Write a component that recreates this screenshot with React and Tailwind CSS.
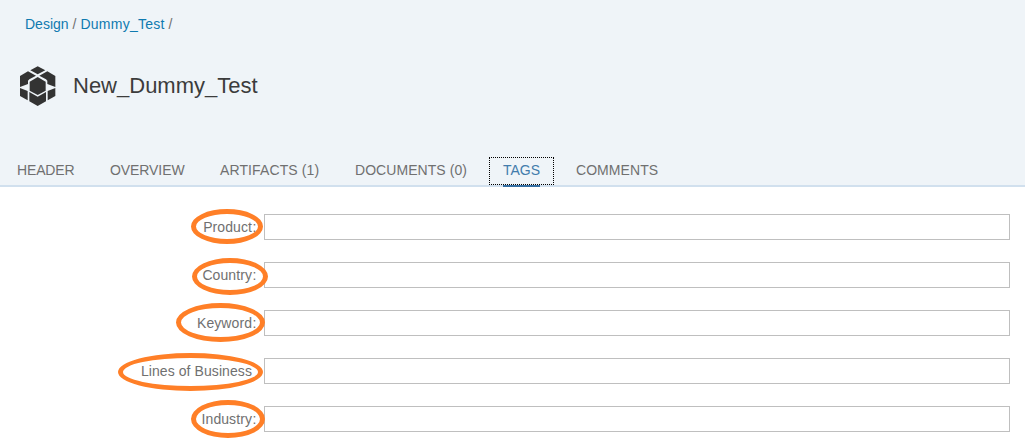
const tabs = [
  { label: 'HEADER', width: 'w-[57px] tracking-[-0.16px]' },
  { label: 'OVERVIEW', width: 'w-[74px] tracking-[-0.08px]' },
  { label: 'ARTIFACTS (1)', width: 'w-[99px] tracking-[0.11px]' },
  { label: 'DOCUMENTS (0)', width: 'w-[112px] tracking-[0.06px]' },
  { label: 'TAGS', width: 'w-[37px]', active: true },
  { label: 'COMMENTS', width: 'w-[82px] tracking-[0.06px]' },
];

const fields = [
  { label: 'Product', colon: true, ring: 'left-[191px] -top-[5px] w-[72px] h-[35px]' },
  { label: 'Country', colon: true, ring: 'left-[192px] -top-[4px] w-[76px] h-[37px]' },
  { label: 'Keyword', colon: true, ring: 'left-[176px] -top-[7px] w-[89px] h-[39px]' },
  { label: 'Lines of Business', ring: 'left-[118px] -top-[5px] w-[145px] h-[38px]' },
  { label: 'Industry', colon: true, ring: 'left-[191px] -top-[6px] w-[74px] h-[38px]' },
];

function PackageIcon() {
  return (
    <svg className="h-[40px] w-[36px] shrink-0" viewBox="6 4 108 120" fill="#333333" aria-hidden="true">
      <path d="M59 5 82 17 59 29 37 17Z" />
      <path d="M30 20 54 33 34 44 30 48V58L6 67V34Z" />
      <path d="M88 20 64 33 84 44 88 48V58L112 67V34Z" />
      <path d="M59 37 83 51V78L59 91 35 78V51Z" />
      <path d="M6 70 29 79V107L6 94Z" />
      <path d="M112 70 89 79V107L112 94Z" />
      <path d="M34 82 59 96 84 82V110L59 124 34 110Z" />
    </svg>
  );
}

export default function App() {
  return (
    <div className="h-[448px] w-[1025px] overflow-hidden bg-white font-['Liberation_Sans',Arial,sans-serif] text-sm text-[#707070]">
      <header className="flex h-[187px] flex-col border-b-2 border-[#d1e0ee] bg-[#eff4f8]">
        <nav className="mt-[14px] flex h-5 items-center gap-[4px] pl-[25px]">
          <a className="text-[#0f7ab0]">Design</a>
          <span>/</span>
          <a className="tracking-[0.24px] text-[#0f7ab0]">Dummy_Test</a>
          <span>/</span>
        </nav>
        <div className="mt-8 flex h-10 items-center gap-[17px] pl-5">
          <PackageIcon />
          <h1 className="text-[22px] leading-10 text-[#3c3c3c]">New_Dummy_Test</h1>
        </div>
        <div className="mt-auto flex h-[30px] gap-[36px] pl-[17px]">
          {tabs.map((tab) => (
            <div key={tab.label} className={`relative h-[30px] shrink-0 whitespace-nowrap leading-[30px] ${tab.width} ${tab.active ? 'text-[#427cac]' : ''}`}>
              {tab.label}
              {tab.active && (
                <>
                  <span className="absolute -left-[14px] top-[2px] h-[28px] w-[65px] border border-dotted border-black" />
                  <span className="absolute left-0 top-[30px] h-[2px] w-full bg-[#346fa3]" />
                </>
              )}
            </div>
          ))}
        </div>
      </header>
      <main className="flex flex-col gap-[22px] pt-[27px]">
        {fields.map((field) => (
          <div key={field.label} className="relative flex h-[26px] items-center">
            <label className="flex w-[264px] justify-end leading-[26px]">
              <span className="tracking-[0.08px]">{field.label}</span>
              <span className="w-[12px] pl-[0.5px]">{field.colon ? ':' : ''}</span>
            </label>
            <input aria-label={field.label} className="h-[26px] w-[746px] border border-[#bfbfbf] bg-white px-2 outline-none" />
            <span className={`pointer-events-none absolute rounded-[50%] border-[5px] border-[#ff7f27] ${field.ring}`} />
          </div>
        ))}
      </main>
    </div>
  );
}
